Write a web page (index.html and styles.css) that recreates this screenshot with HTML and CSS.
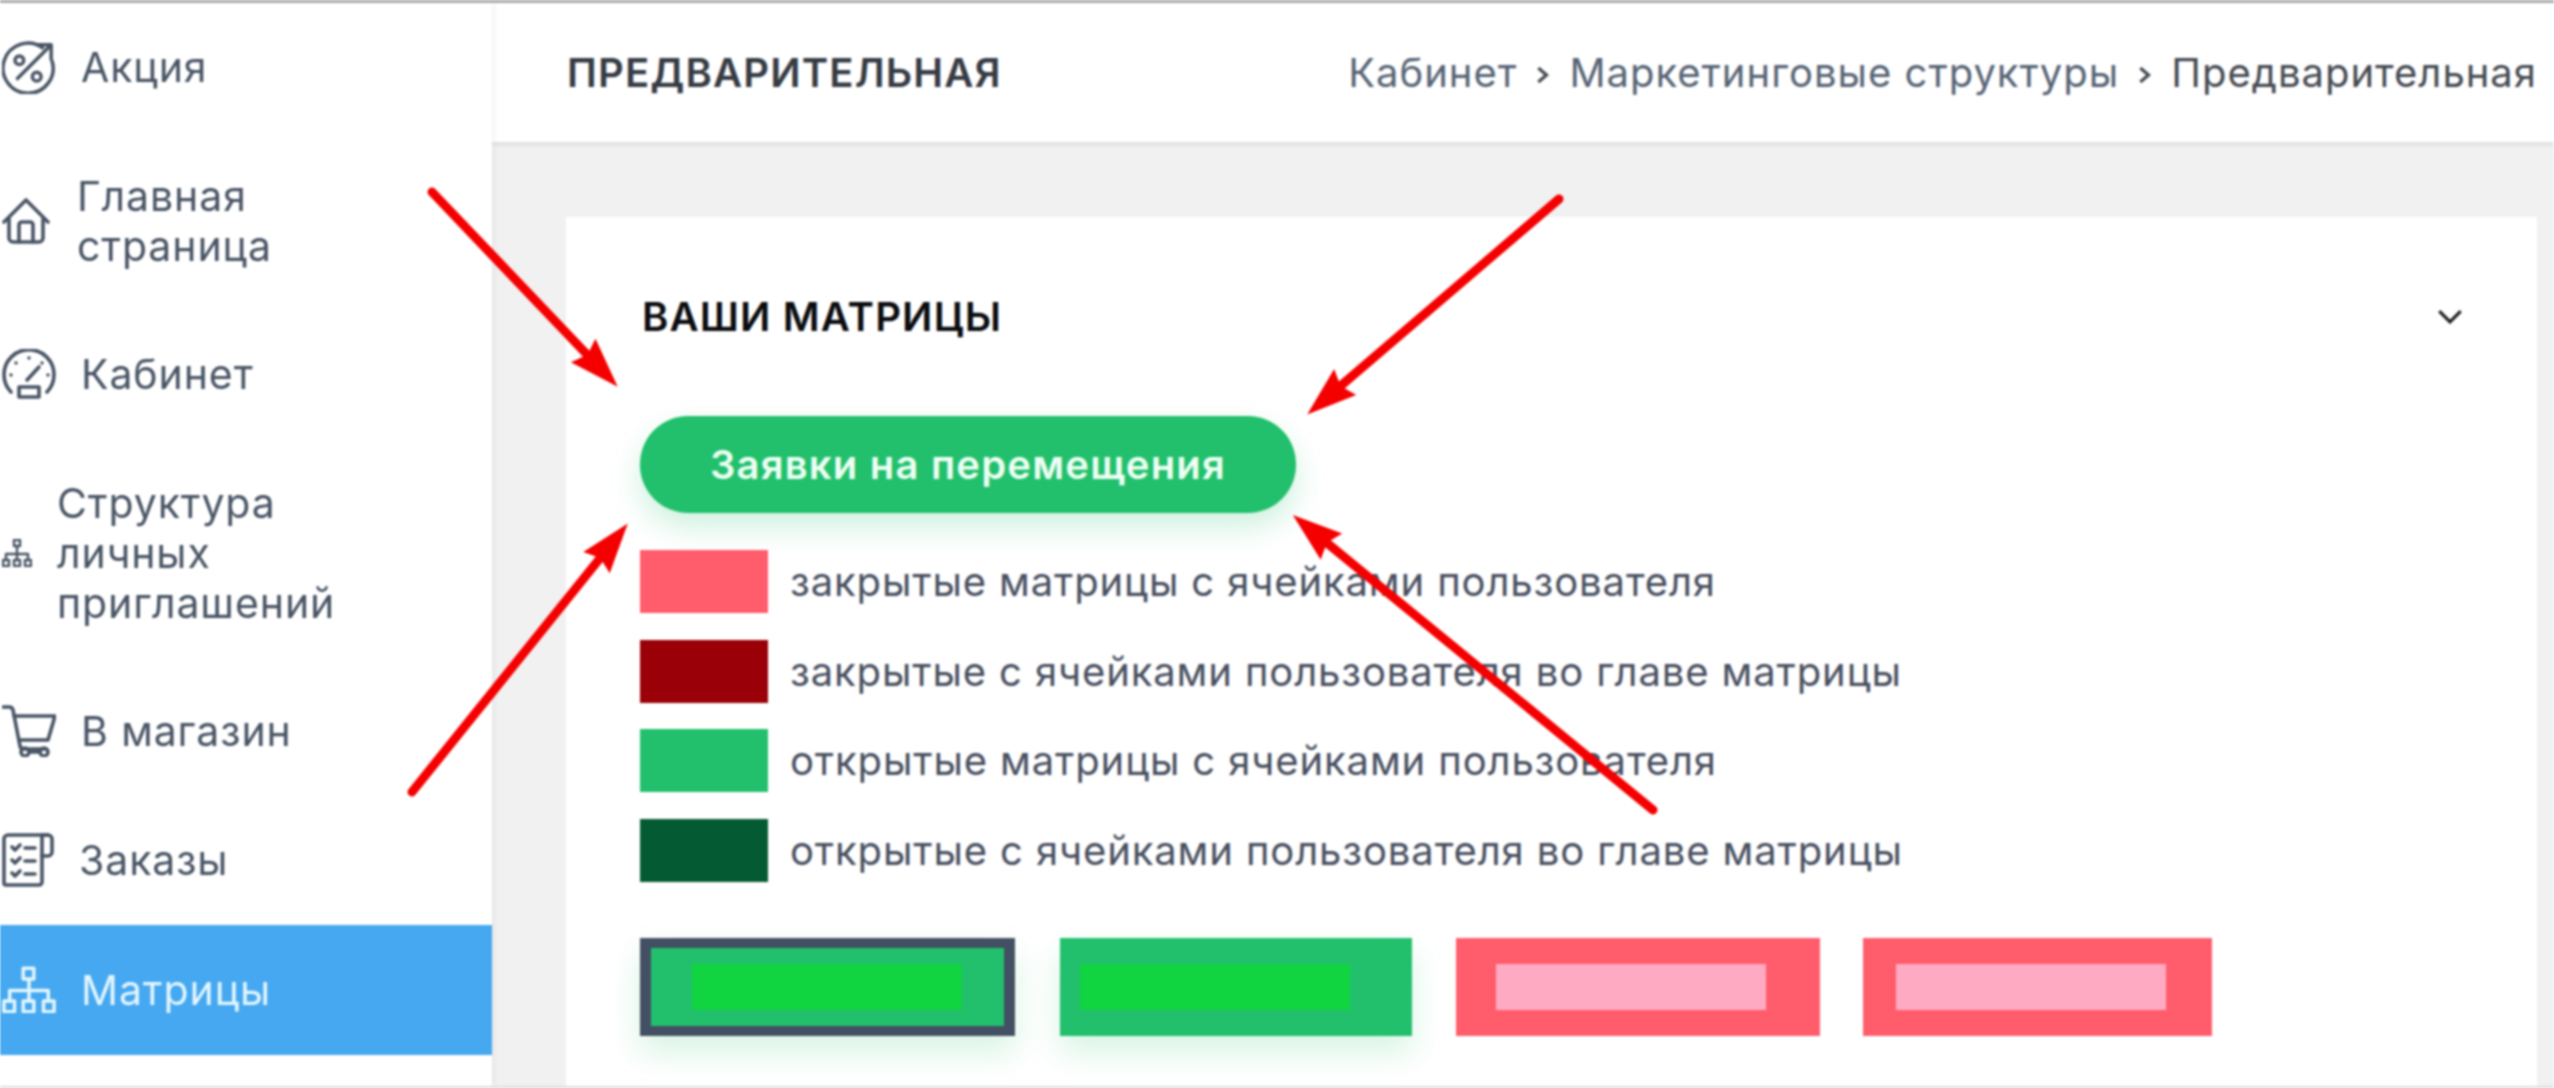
FILE: index.html
```html
<!DOCTYPE html>
<html lang="ru">
<head>
<meta charset="utf-8">
<title>Предварительная</title>
<link rel="stylesheet" href="styles.css">
</head>
<body>
<div class="page">
  <aside class="sidebar">
    <a class="item">
      <svg class="icon ic-action" viewBox="0 0 56 56"><path d="M42 8A26 26 0 1 0 52 22"/><path d="M16 40L50 6M36 5h15v15"/><circle cx="18" cy="21" r="4.5"/><circle cx="36" cy="38" r="4.5"/></svg>
      <span class="label">Акция</span>
    </a>
    <a class="item">
      <svg class="icon ic-home" viewBox="0 0 48 46"><path d="M2 24L24 2l22 22"/><path d="M7 21v19a4 4 0 0 0 4 4h26a4 4 0 0 0 4-4V21"/><path d="M17 44V27a3 3 0 0 1 3-3h8a3 3 0 0 1 3 3v17"/></svg>
      <span class="label label-home">Главная<br>страница</span>
    </a>
    <a class="item">
      <svg class="icon ic-gauge" viewBox="0 0 54 50"><path d="M9 43A25 25 0 1 1 45 43"/><path d="M25 31L37 18"/><rect x="17" y="38" width="20" height="10"/><path class="dot" d="M27 9v.1M14 14v.1M40 14v.1M9 26v.1M46 26v.1"/></svg>
      <span class="label">Кабинет</span>
    </a>
    <a class="item">
      <svg class="icon ic-tree" viewBox="0 0 30 28"><rect x="12" y="1" width="6" height="6"/><path d="M15 7v14M4 21v-6h22v6"/><rect x="1" y="21" width="6" height="6"/><rect x="12" y="21" width="6" height="6"/><rect x="23" y="21" width="6" height="6"/></svg>
      <span class="label">Структура<br>личных<br>приглашений</span>
    </a>
    <a class="item">
      <svg class="icon ic-cart" viewBox="0 0 54 52"><path d="M1 2h6a4 4 0 0 1 4 3l7 36a4 4 0 0 0 4 3h22"/><path d="M12 11h41l-7 24H17"/><circle cx="23" cy="47" r="4"/><circle cx="42" cy="47" r="4"/><path d="M27 47h11"/></svg>
      <span class="label">В магазин</span>
    </a>
    <a class="item">
      <svg class="icon ic-orders" viewBox="0 0 52 54"><path d="M46 2H6a4 4 0 0 0-4 4v44a2 2 0 0 0 2 2h33a3 3 0 0 0 3-3V22"/><path d="M40 2h6a4 4 0 0 1 4 4v13a4 4 0 0 1-4 4h-6z"/><path d="M10 14l3 3 5-5M10 27l3 3 5-5M10 40l3 3 5-5M23 15h10M23 28h10M23 41h10"/></svg>
      <span class="label">Заказы</span>
    </a>
    <a class="item active">
      <svg class="icon ic-matrix" viewBox="0 0 56 48"><rect x="22" y="2" width="11" height="11"/><path d="M28 13v23M8 36V25h40v11"/><rect x="2" y="36" width="11" height="11"/><rect x="22" y="36" width="11" height="11"/><rect x="43" y="36" width="11" height="11"/></svg>
      <span class="label">Матрицы</span>
    </a>
  </aside>
  <main class="main">
    <header class="topbar">
      <h1 class="page-title">ПРЕДВАРИТЕЛЬНАЯ</h1>
      <nav class="crumbs">
        <span>Кабинет</span>
        <svg class="sep" viewBox="0 0 12 16"><path d="M2 2l7 6-7 6"/></svg>
        <span>Маркетинговые структуры</span>
        <svg class="sep" viewBox="0 0 12 16"><path d="M2 2l7 6-7 6"/></svg>
        <span class="current">Предварительная</span>
      </nav>
    </header>
    <div class="content">
      <section class="card">
        <div class="card-head">
          <h2 class="card-title">ВАШИ МАТРИЦЫ</h2>
          <svg class="chevron" viewBox="0 0 24 14"><path d="M2 2l10 10L22 2"/></svg>
        </div>
        <button class="btn" type="button">Заявки на перемещения</button>
        <ul class="legend">
          <li><i class="sw sw-red"></i>закрытые матрицы с ячейками пользователя</li>
          <li><i class="sw sw-darkred"></i>закрытые с ячейками пользователя во главе матрицы</li>
          <li><i class="sw sw-green"></i>открытые матрицы с ячейками пользователя</li>
          <li><i class="sw sw-darkgreen"></i>открытые с ячейками пользователя во главе матрицы</li>
        </ul>
        <div class="tiles">
          <div class="tile tile-green tile-selected"><b class="bar bar-green"></b></div>
          <div class="tile tile-green tile-b"><b class="bar bar-green"></b></div>
          <div class="tile tile-red tile-c"><b class="bar bar-pink"></b></div>
          <div class="tile tile-red tile-d"><b class="bar bar-pink"></b></div>
        </div>
      </section>
    </div>
  </main>
  <svg class="arrows" viewBox="0 0 2554 1088">
    <defs>
      <marker id="head" markerUnits="userSpaceOnUse" markerWidth="60" markerHeight="44" refX="24" refY="22" orient="auto">
        <path d="M54 22L4 5l6 17L4 39z"/>
      </marker>
    </defs>
    <path class="arrow" d="M432 192L597 365"/>
    <path class="arrow" d="M1559 199L1330 395"/>
    <path class="arrow" d="M412 792L609 547"/>
    <path class="arrow" d="M1653 810L1316 534"/>
  </svg>
</div>
</body>
</html>
```
FILE: styles.css
```css
* { box-sizing: border-box; }
html, body { margin: 0; height: 100%; overflow: hidden; background: #fff; }
body { font-family: Inter, "Noto Sans", sans-serif; color: #4c5565; }

.page {
  position: relative;
  display: flex;
  width: 2554px;
  height: 1088px;
  border-top: 3px solid #a9abac;
  border-bottom: 2px solid #dcdddd;
  overflow: hidden;
  filter: blur(1px);
}

/* sidebar */
.sidebar {
  flex: 0 0 492px;
  display: flex;
  flex-direction: column;
  background: #fff;
  box-shadow: 2px 0 6px rgba(0, 0, 0, .06);
  z-index: 2;
}
.item {
  display: flex;
  align-items: center;
  padding: 39px 0 39.6px 2px;
  font-size: 41px;
  letter-spacing: .9px;
  line-height: 50px;
  color: #485464;
}
.item.active { padding-top: 40px; padding-bottom: 40px; background: #45a8f0; color: #e4f6ff; }
.label { margin-left: 25px; white-space: nowrap; }
.label-home { margin-left: 27px; }
.icon { flex: none; margin: -4px 0; fill: none; stroke: currentColor; stroke-width: 3.6; stroke-linecap: round; stroke-linejoin: round; }
.dot { stroke-width: 3.5; }
.ic-action { width: 54px; height: 54px; }
.ic-home { width: 48px; height: 46px; }
.ic-gauge { width: 54px; height: 50px; }
.ic-tree { width: 30px; height: 28px; stroke-width: 2.4; }
.ic-cart { width: 54px; height: 52px; }
.ic-orders { width: 52px; height: 54px; }
.ic-matrix { width: 54px; height: 47px; }

/* main */
.main { flex: 1; display: flex; flex-direction: column; min-width: 0; background: #f1f1f1; }
.topbar {
  flex: 0 0 139px;
  display: flex;
  align-items: center;
  justify-content: space-between;
  padding: 0 17px 0 75px;
  background: #fff;
  box-shadow: 0 2px 5px rgba(0, 0, 0, .1);
}
.page-title { margin: 0; font-size: 40px; font-weight: 600; letter-spacing: 1.15px; line-height: 50px; color: #363b44; }
.crumbs { display: flex; align-items: center; font-size: 40px; letter-spacing: 1px; color: #566475; }
.current { color: #454a52; }
.sep { width: 14px; height: 20px; margin: 4px 19px 0; fill: none; stroke: #454a52; stroke-width: 2.8; }

.content { flex: 1; min-height: 0; padding: 75px 17px 0 74px; }
.card { height: 100%; padding: 0 0 0 74px; background: #fff; }
.card-head { display: flex; align-items: center; justify-content: space-between; height: 199px; padding: 0 74px 0 2px; }
.card-title { margin: 0; font-size: 40px; font-weight: 600; letter-spacing: 1.15px; color: #0b0c0f; }
.chevron { width: 26px; height: 15px; fill: none; stroke: #1c1f24; stroke-width: 3; }

.btn {
  display: block;
  width: 656px;
  height: 97px;
  border: 0;
  border-radius: 48px;
  background: #22c06c;
  color: #eefff4;
  font: 600 40px Inter, "Noto Sans", sans-serif;
  letter-spacing: 1.2px;
  box-shadow: 0 14px 30px rgba(34, 192, 108, .22);
}

.legend { list-style: none; margin: 37px 0 0; padding: 0; }
.legend li { display: flex; align-items: center; height: 63px; margin-bottom: 26.5px; font-size: 40px; letter-spacing: .88px; color: #484f60; }
.sw { flex: none; width: 128px; height: 63px; margin-right: 22px; }
.sw-red { background: #ff5d6c; }
.sw-darkred { background: #990008; }
.sw-green { background: #22c06c; }
.sw-darkgreen { background: #045a33; }

.tiles { display: flex; margin-top: 56px; }
.tile { flex: none; height: 98px; display: flex; align-items: center; box-shadow: 0 16px 30px rgba(34, 192, 108, .18); }
.tile-green { background: #22c06c; }
.tile-red { background: #ff5d6c; box-shadow: none; }
.tile-selected { width: 375px; border: solid #434f62; border-width: 10px 11px; padding-left: 41px; }
.tile-b { width: 352px; margin-left: 45px; padding-left: 20px; }
.tile-c { width: 364px; margin-left: 44px; padding-left: 40px; }
.tile-d { width: 349px; margin-left: 43px; padding-left: 33px; }
.bar { display: block; width: 270px; height: 46px; }
.bar-green { background: #10d440; }
.bar-pink { background: #ffaac3; }

/* annotation arrows over the screenshot */
.arrows { position: absolute; left: 0; top: -3px; width: 2554px; height: 1088px; z-index: 5; pointer-events: none; }
.arrows marker path { fill: #f50000; }
.arrow { fill: none; stroke: #f50000; stroke-width: 9; stroke-linecap: round; marker-end: url(#head); }
```
